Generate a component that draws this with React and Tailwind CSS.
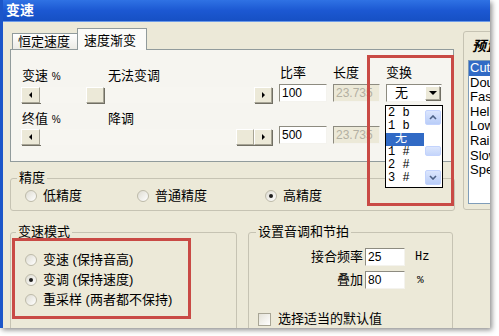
import React from "react";

const SANS = "font-['Liberation_Sans','Noto_Sans_CJK_SC',sans-serif]";
const MONO = "font-['Liberation_Mono','Noto_Sans_CJK_SC',monospace]";

const PRESETS = ["Cutting", "Double Speed", "Fast", "Helium", "Low Pitch", "Rain", "Slow", "Speed Up"];
const SHIFTS = ["2 b", "1 b", "无", "1 #", "2 #", "3 #"];

function Tri({ dir }) {
  if (dir === "left")
    return <span className="block h-0 w-0 border-y-[3px] border-y-transparent border-r-[3px] border-r-black" />;
  if (dir === "right")
    return <span className="block h-0 w-0 border-y-[3px] border-y-transparent border-l-[3px] border-l-black" />;
  return <span className="block h-0 w-0 border-x-[4px] border-x-transparent border-t-[4px] border-t-black" />;
}

function Raised({ className = "", children }) {
  return (
    <div
      className={`flex items-center justify-center bg-[#ece9d8] border border-t-white border-l-white border-r-[#a7a495] border-b-[#a7a495] shadow-[1px_1px_0_#716f64] ${className}`}
    >
      {children}
    </div>
  );
}

function Slider({ thumb }) {
  return (
    <div className="flex h-4 w-[251px]">
      <Raised className="h-4 w-[19px]">
        <Tri dir="left" />
      </Raised>
      <div className="flex h-4 flex-1 bg-[#f7f6f1]">
        <Raised className={`h-4 w-[18px] ${thumb}`} />
      </div>
      <Raised className="h-4 w-[18px]">
        <Tri dir="right" />
      </Raised>
    </div>
  );
}

function TextBox({ value, disabled, className = "" }) {
  return (
    <div
      className={`h-[18px] border border-t-[#8d8b80] border-l-[#8d8b80] border-r-[#f4f3ee] border-b-[#f4f3ee] pl-[2px] text-[12px] leading-[16px] ${
        disabled ? "bg-[#ece9d8] text-[#b3b0a2]" : "bg-white text-black"
      } ${className}`}
    >
      {value}
    </div>
  );
}

function Radio({ label, checked, className = "" }) {
  return (
    <div className={`flex items-center ${className}`}>
      <span className="mr-[6px] flex h-3 w-3 items-center justify-center rounded-full border border-[#bdbaa9] bg-linear-to-br from-[#dedcd2] to-white">
        {checked && <span className="h-[4px] w-[4px] rounded-full bg-[#1e1e1e]" />}
      </span>
      <span>{label}</span>
    </div>
  );
}

function ScrollBtn({ up }) {
  return (
    <div className="flex h-[15px] w-[16px] items-center justify-center rounded-[2px] border border-[#c3d3fd] bg-linear-to-b from-[#dce6fd] to-[#b9cdf8]">
      <svg width="8" height="5" viewBox="0 0 8 5">
        <path
          d={up ? "M1 4 L4 1 L7 4" : "M1 1 L4 4 L7 1"}
          fill="none"
          stroke="#4d6185"
          strokeWidth="1.6"
        />
      </svg>
    </div>
  );
}

export default function App() {
  return (
    <div className={`h-[336px] w-[499px] bg-white text-[13px] text-black ${SANS}`}>
      <div className="flex h-[328px] w-[490px] flex-col overflow-hidden border-l-[3px] border-l-[#1c56c9] bg-[#ece9d8] shadow-[2px_2px_5px_rgba(0,0,0,0.45)]">
        {/* title bar */}
        <div className="flex h-[26px] items-center border-b border-b-[#6d9be8] bg-linear-to-b from-[#2f72e4] via-[#1c58d2] to-[#1650c4] pl-[3px] text-[14px] font-bold text-white">
          变速
        </div>

        <div className="relative flex flex-1 items-start pl-[7px]">
          {/* left column */}
          <div className="flex w-[445px] flex-col">
            {/* tabs */}
            <div className="flex h-[27px] items-end pt-[6px]">
              <div className="ml-[2px] flex h-[16px] w-[65px] items-center border border-b-0 border-r-0 border-[#919b9c] bg-linear-to-b from-white to-[#ecebe5] pl-[5px] leading-[14px]">
                恒定速度
              </div>
              <div className="relative z-10 -mb-px flex h-[22px] w-[70px] items-center border border-b-0 border-[#919b9c] bg-[#fbfbf9] pl-[6px] pt-[2px] leading-[14px]">
                速度渐变
              </div>
            </div>

            {/* tab panel */}
            <div className="h-[113px] w-[444px] border border-[#919b9c] bg-[#f6f5f0] pl-[10px] pt-[15px]">
              <div className="flex items-end">
                <div className="w-[251px]">
                  <div className="flex h-4 pl-px leading-4">
                    <span className="w-[86px]">
                      变速 <span className="text-[10px]">%</span>
                    </span>
                    <span>无法变调</span>
                  </div>
                  <div className="mt-[3px]">
                    <Slider thumb="ml-[46px]" />
                  </div>
                </div>
                <div className="mb-px ml-[7px]">
                  <div className="h-4 pl-px leading-4">比率</div>
                  <TextBox value="100" className="mt-[3px] w-[48px]" />
                </div>
                <div className="mb-px ml-[6px]">
                  <div className="h-4 leading-4">长度</div>
                  <TextBox value="23.735" disabled className="mt-[3px] w-[47px]" />
                </div>
                <div className="mb-px ml-[6px]">
                  <div className="h-4 leading-4">变换</div>
                  <div className="relative mt-[3px] flex h-[18px] w-[56px] items-center border border-t-[#8d8b80] border-l-[#8d8b80] border-r-[#f4f3ee] border-b-[#f4f3ee] bg-white">
                    <span className="ml-[8px] flex-1 leading-4">无</span>
                    <Raised className="mr-px h-[14px] w-[15px]">
                      <Tri dir="down" />
                    </Raised>
                    {/* open dropdown list */}
                    <div className="absolute left-[-2px] top-[20px] z-20 flex h-[83px] w-[58px] border border-black bg-white">
                      <div className={`w-[38px] pt-px text-[12px] ${MONO}`}>
                        {SHIFTS.map((s) => (
                          <div
                            key={s}
                            className={`h-[13px] leading-[13px] ${
                              s === "无" ? "bg-[#316ac5] pl-[9px] text-white" : "pl-[2px]"
                            }`}
                          >
                            {s}
                          </div>
                        ))}
                      </div>
                      <div className="flex flex-1 flex-col items-center pt-[4px]">
                        <ScrollBtn up />
                        <div className="mt-[21px] h-[10px] w-[16px] rounded-[2px] border border-[#c3d3fd] bg-linear-to-b from-[#dce6fd] to-[#c4d5fa]" />
                        <div className="flex-1" />
                        <div className="mb-[2px]">
                          <ScrollBtn />
                        </div>
                      </div>
                    </div>
                  </div>
                </div>
              </div>

              <div className="mt-[8px] flex items-end">
                <div className="w-[251px]">
                  <div className="flex h-4 pl-px leading-4">
                    <span className="w-[86px]">
                      终值 <span className="text-[10px]">%</span>
                    </span>
                    <span>降调</span>
                  </div>
                  <div className="mt-[2px]">
                    <Slider thumb="ml-[196px]" />
                  </div>
                </div>
                <TextBox value="500" className="mb-px ml-[7px] w-[48px]" />
                <TextBox value="23.735" disabled className="mb-px ml-[6px] w-[47px]" />
              </div>
            </div>

            {/* precision */}
            <fieldset className="mt-[8px] w-[445px] rounded-[3px] border border-[#c6c3b3]">
              <legend className="ml-[6px] px-[2px] leading-4">精度</legend>
              <div className="flex h-[24px] items-center pb-[7px] pl-[14px] pt-[3px] leading-[14px]">
                <Radio label="低精度" className="w-[112px]" />
                <Radio label="普通精度" className="w-[128px]" />
                <Radio label="高精度" checked />
              </div>
            </fieldset>

            {/* bottom groups */}
            <div className="mt-[13px] flex">
              <fieldset className="h-[120px] w-[227px] rounded-[3px] border border-[#c6c3b3]">
                <legend className="ml-[5px] px-[2px] leading-4">变速模式</legend>
                <div className="pl-[14px] pt-[10px]">
                  <Radio label="变速 (保持音高)" className="h-5" />
                  <Radio label="变调 (保持速度)" checked className="h-5" />
                  <Radio label="重采样 (两者都不保持)" className="h-5" />
                </div>
              </fieldset>

              <fieldset className="ml-[11px] h-[120px] w-[205px] rounded-[3px] border border-[#c6c3b3]">
                <legend className="ml-[7px] px-[2px] leading-4">设置音调和节拍</legend>
                <div className="pt-[8px]">
                  <div className="flex h-[18px] items-center">
                    <span className="w-[114px] text-right">接合频率</span>
                    <TextBox value="25" className="ml-[2px] w-[40px]" />
                    <span className={`ml-[10px] text-[12px] ${MONO}`}>Hz</span>
                  </div>
                  <div className="mt-[5px] flex h-[18px] items-center">
                    <span className="w-[114px] text-right">叠加</span>
                    <TextBox value="80" className="ml-[2px] w-[40px]" />
                    <span className={`ml-[12px] text-[11px] ${MONO}`}>%</span>
                  </div>
                  <div className="mt-[22px] flex items-center pl-[9px]">
                    <span className="h-[13px] w-[13px] border border-[#a8a595] bg-linear-to-br from-[#e4e2d8] to-white" />
                    <span className="ml-[7px] leading-4">选择适当的默认值</span>
                  </div>
                </div>
              </fieldset>
            </div>
          </div>

          {/* presets */}
          <div className="ml-[8px] mt-[9px] h-[179px] w-[60px] shrink-0 rounded-[3px] border border-[#c6c3b3] pl-[4px] pt-[6px]">
            <div className="h-4 whitespace-nowrap pl-[4px] text-[14px] font-bold italic leading-4">预置方案</div>
            <div className="mt-[6px] h-[144px] w-[70px] overflow-hidden border border-[#7f9db9] bg-white text-[13px] leading-[14.6px]">
              {PRESETS.map((p, i) => (
                <div
                  key={p}
                  className={`whitespace-nowrap pl-px ${i === 0 ? "bg-[#316ac5] text-white" : ""}`}
                >
                  {p}
                </div>
              ))}
            </div>
          </div>

          {/* red highlight boxes */}
          <div className="pointer-events-none absolute left-[364px] top-[33px] z-30 h-[151px] w-[87px] border-[3px] border-[#c94a45]" />
          <div className="pointer-events-none absolute left-[9px] top-[216px] z-30 h-[81px] w-[179px] border-[3px] border-[#c94a45]" />
        </div>
      </div>
    </div>
  );
}
